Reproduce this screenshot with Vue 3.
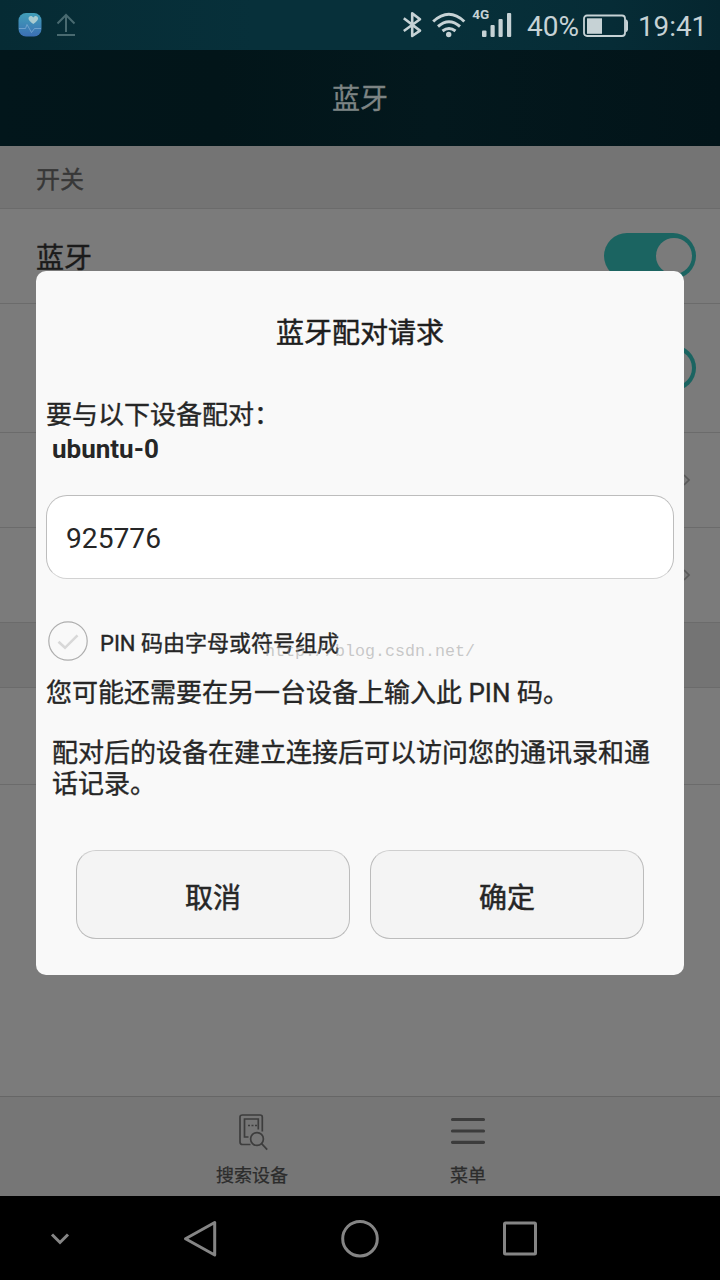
<script setup>
const rows = [
  { kind: 'section', height: 63, text: '开关' },
  { kind: 'item', height: 95, text: '蓝牙', toggle: true },
  { kind: 'item', height: 129, toggle: true },
  { kind: 'item', height: 95, arrow: true },
  { kind: 'item', height: 95, arrow: true },
  { kind: 'section', height: 65 },
  { kind: 'item', height: 97 },
]
</script>

<template>
  <div class="screen">
    <header class="status">
      <div class="status-left">
        <svg width="24" height="24" viewBox="0 0 24 24">
          <defs>
            <linearGradient id="healthFill" x1="0" y1="0" x2="0" y2="1">
              <stop offset="0" stop-color="#419fb8" />
              <stop offset="1" stop-color="#3b6fb4" />
            </linearGradient>
          </defs>
          <rect x=".5" y="0" width="23" height="23.500" rx="7.500" fill="url(#healthFill)" />
          <path d="M1 15.500h6.500l1.500-4 4.500 8 3-4H23" fill="none" stroke="#7ba9d2" stroke-width=".8" />
          <path d="M15.300 11c-3-2.200-4.800-3.700-4.800-5.500 0-3 3.600-3.400 4.800-1 1.200-2.400 4.800-2 4.800 1 0 1.800-1.800 3.300-4.800 5.500z" fill="#a9cbd0" />
        </svg>
        <svg class="upload" width="20" height="24" viewBox="0 0 20 24">
          <path d="M10 19V3M1.500 10.500L10 2l8.500 8.500M1 22h18" fill="none" stroke="#496a70" stroke-width="2" />
        </svg>
      </div>
      <div class="status-right">
        <svg width="112" height="50" viewBox="0 0 112 50">
          <path d="M3.800 18.200L20 30.600 12.200 36V13.400L20 19.200 3.800 31" fill="none" stroke="#c6d2d5" stroke-width="2.600" stroke-linejoin="round" />
          <g fill="none" stroke="#c6d2d5" stroke-width="3">
            <path d="M33.200 21.500Q49 7 64.300 21.500" />
            <path d="M38 26.500Q49 17 60 26.500" />
            <path d="M42.500 31Q49 26 55.500 31" />
          </g>
          <circle cx="48.700" cy="34.500" r="2.700" fill="#c6d2d5" />
          <text x="72.300" y="18.700" class="net">4G</text>
          <g fill="#c6d2d5">
            <rect x="82" y="30.500" width="4.500" height="6.500" rx="1" />
            <rect x="90.500" y="25" width="4.200" height="12" rx="1" />
            <rect x="98.500" y="19" width="4.200" height="18" rx="1" />
            <rect x="107" y="13" width="4.200" height="24" rx="1" />
          </g>
        </svg>
        <span class="percent">40%</span>
        <svg class="battery" width="46" height="24" viewBox="0 0 46 24">
          <rect x="1" y="1.500" width="41" height="20.500" rx="3" fill="none" stroke="#c6d2d5" stroke-width="1.800" />
          <rect x="4" y="4.300" width="15" height="15.500" fill="#c6d2d5" />
          <path d="M42.500 5q2.500 1 2.500 3v7.500q0 2-2.500 3z" fill="#c6d2d5" />
        </svg>
        <span class="clock">19:41</span>
      </div>
    </header>
    <div class="title">蓝牙</div>

    <main class="list">
      <div v-for="(row, i) in rows" :key="i" class="row" :class="row.kind" :style="{ height: row.height + 'px' }">
        <span>{{ row.text }}</span>
        <i v-if="row.toggle" class="toggle"></i>
        <svg v-if="row.arrow" class="arrow" width="12" height="16" viewBox="0 0 12 16">
          <path d="M4 3l5 5-5 5" fill="none" stroke="#5a5a5a" stroke-width="1.700" />
        </svg>
      </div>
    </main>

    <footer class="tools">
      <div class="tool">
        <svg width="32" height="40" viewBox="0 0 32 40" fill="none" stroke="#3d3d3d" stroke-width="1.700">
          <path d="M14.500 33.500H6.500Q4 33.500 4 31V6Q4 4 6.500 4H24Q26.300 4 26.300 6V20.500M12.500 26H8.500V8H22.300V18.500" />
          <path d="M12 14.500h2m1.500 0h2m1.500 0h2" stroke-width="1.700" />
          <circle cx="21" cy="28" r="6.400" />
          <path d="M25.600 32.600l5.600 6" />
        </svg>
        <span>搜索设备</span>
      </div>
      <div class="tool">
        <svg width="36" height="40" viewBox="0 0 36 40">
          <path d="M2.500 8.500h31M2.500 20h31M2.500 31.300h31" stroke="#3c3c3c" stroke-width="3.200" stroke-linecap="round" />
        </svg>
        <span>菜单</span>
      </div>
    </footer>

    <nav class="nav">
      <svg v-for="n in 4" :key="n" width="40" height="40" viewBox="0 0 40 40" fill="none" stroke="#858585" stroke-width="3">
        <path v-if="n === 1" d="M12 15.500l8 8 8-8" />
        <path v-else-if="n === 2" d="M34.700 3.500V36L5.500 19.700z" stroke-linejoin="round" />
        <circle v-else-if="n === 3" cx="20" cy="19.700" r="17.300" />
        <rect v-else x="4.500" y="4" width="31" height="31" rx="1" />
      </svg>
    </nav>

    <section class="dialog">
      <h1>蓝牙配对请求</h1>
      <p class="ask">要与以下设备配对：</p>
      <p class="device">ubuntu-0</p>
      <div class="field">925776</div>
      <div class="check">
        <svg width="40" height="40" viewBox="0 0 40 40" fill="none">
          <circle cx="20" cy="20" r="19.200" stroke="#aeaeae" stroke-width="1.200" />
          <path d="M10.500 20.800l6.500 6L29.500 14.300" stroke="#d8d8d8" stroke-width="2.600" />
        </svg>
        <span>PIN 码由字母或符号组成</span>
      </div>
      <p class="hint">您可能还需要在另一台设备上输入此 PIN 码。</p>
      <p class="note">配对后的设备在建立连接后可以访问您的通讯录和通话记录。</p>
      <div class="actions">
        <button>取消</button>
        <button>确定</button>
      </div>
    </section>
    <div class="watermark">http://blog.csdn.net/</div>
  </div>
</template>

<style>
body { margin: 0; background: #000; }
</style>

<style scoped>
* { box-sizing: border-box; }
.screen {
  position: relative; width: 720px; height: 1280px; overflow: hidden;
  display: flex; flex-direction: column; background: #7b7b7b;
  font-family: Roboto, "Noto Sans CJK SC", sans-serif; color: #262626;
}
.status {
  height: 50px; flex: none; display: flex; justify-content: space-between;
  background: linear-gradient(90deg, #062b34, #07303a 35%, #07303a 60%, #062c36 85%, #05262f);
}
.status-left { display: flex; padding: 13px 0 0 18px; gap: 14px; }
.status-right { display: flex; align-items: center; color: #c6d2d5; font-size: 27.800px; line-height: 50px; padding-right: 13px; }
.net { font: bold 13.5px Roboto, sans-serif; fill: #c6d2d5; }
.percent { width: 56px; margin-left: 15px; font-size: 28px; padding-top: 3px; }
.battery { margin-top: 2px; }
.clock { width: 69px; margin-left: 9px; padding-top: 3px; white-space: nowrap; }
.title {
  height: 96px; flex: none; background: linear-gradient(90deg, #02161b, #021519 30%, #03181d 60%, #021419);
  color: #7d8484; text-align: center; font-size: 28px; line-height: 99px; -webkit-text-stroke: .3px;
}
.list { height: 950px; flex: none; }
.row {
  display: flex; justify-content: space-between; align-items: center;
  padding: 0 24px 0 36px; border-bottom: 1px solid #6b6b6b; font-size: 28px; color: #1a1a1a; -webkit-text-stroke: .4px;
}
.row span { margin-top: -1px; }
.section { background: #747474; color: #373737; font-size: 24px; }
.section span { margin-top: 1px; }
.toggle { width: 92px; height: 46px; border-radius: 23px; background: #1b6461; display: flex; justify-content: flex-end; padding: 5px 4px; }
.toggle::after { content: ""; width: 36px; height: 36px; border-radius: 50%; background: #7b7b7b; }
.arrow { margin-right: 4px; }
.tools { height: 100px; flex: none; background: #767676; border-top: 1px solid #666; display: flex; justify-content: center; }
.tool { width: 216px; display: flex; flex-direction: column; align-items: center; padding-top: 14px; font-size: 18px; line-height: 26px; color: #2c2c2c; -webkit-text-stroke: .25px; }
.tool span { margin-top: 12px; }
.nav { height: 84px; flex: none; background: #000; display: flex; align-items: center; padding: 2px 0 0 40px; gap: 120px; }
.nav svg:first-child { margin-right: -20px; }
.dialog {
  position: absolute; left: 36px; top: 271px; width: 648px; height: 704px;
  border-radius: 10px; background: #f9f9f9; padding: 38px 10px 0; -webkit-text-stroke: .35px;
}
h1, p { margin: 0; font-weight: 400; }
h1 { font-size: 28px; line-height: 50px; text-align: center; color: #1e1e1e; -webkit-text-stroke: .5px; }
.ask { margin-top: 38px; font-size: 26px; line-height: 36px; }
.device { margin-top: -1px; padding-left: 6px; font-size: 26px; line-height: 34px; font-weight: 700; -webkit-text-stroke: 0; }
.field {
  margin-top: 29px; height: 84px; border: 1px solid #bdbdbd; border-bottom-color: #d2d2d2; border-radius: 21px; background: #fff;
  padding-left: 19px; font-size: 28.2px; line-height: 85px; -webkit-text-stroke: 0;
}
.check { display: flex; align-items: center; gap: 12px; height: 40px; margin: 42px 0 0 2px; font-size: 22px; }
.check span { margin-top: -1px; }
.hint { margin-top: 14px; font-size: 26px; line-height: 36px; white-space: nowrap; }
.note { margin: 27px 0 0 6px; width: 606px; font-size: 26px; line-height: 31px; }
.actions { display: flex; gap: 20px; margin: 50px 30px 0; }
button {
  flex: 1; height: 89px; border: 1px solid #bcbcbc; border-top-color: #cfcfcf; border-radius: 20px; background: #f4f4f4;
  font: 400 28px Roboto, "Noto Sans CJK SC", sans-serif; color: #262626; padding: 2px 0 0; -webkit-text-stroke: .5px;
}
.watermark {
  position: absolute; left: 265px; top: 641px; font: 16.67px/22px "Liberation Mono", monospace;
  color: rgba(150, 150, 150, .5);
}
</style>
